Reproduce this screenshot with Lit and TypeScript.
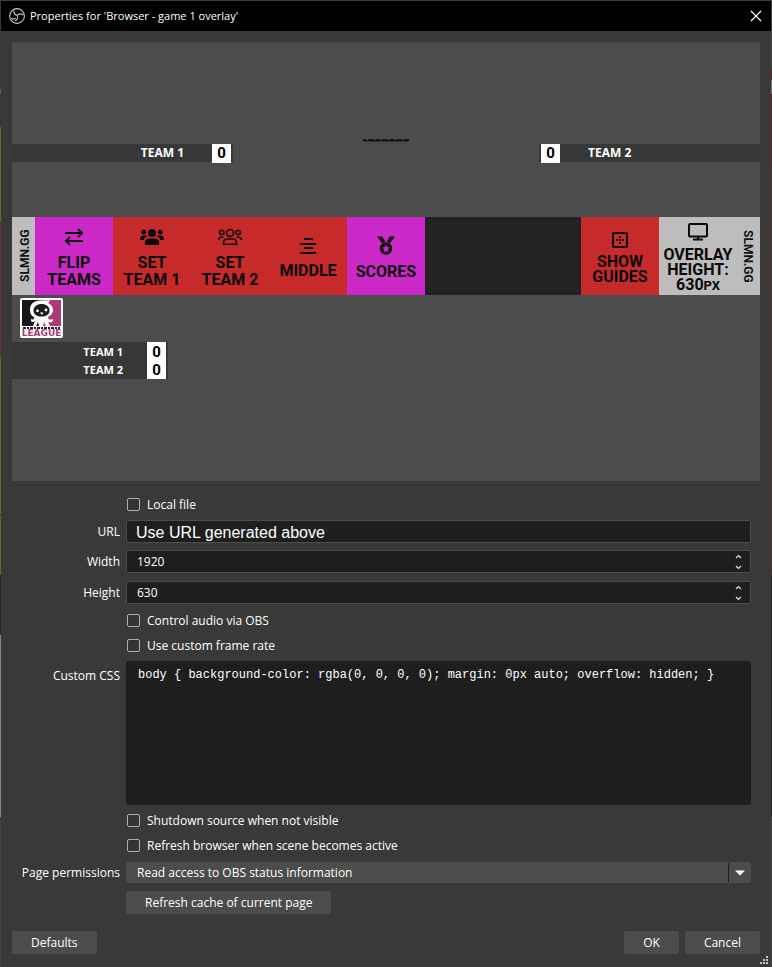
import { LitElement, html, css, svg } from "lit";
import { customElement, property } from "lit/decorators.js";

const icons: Record<string, unknown> = {
  swap: svg`<svg width="20" height="18" viewBox="0 0 20 18" fill="none" stroke="currentColor" stroke-width="2"><path d="M1 5H17M19 13H3"/><path d="M14 1l4 4l-4 4M6 9l-4 4l4 4"/></svg>`,
  users: svg`<svg width="24" height="18" viewBox="0 0 24 18" fill="currentColor"><circle cx="12" cy="5" r="4"/><circle cx="3.8" cy="4.2" r="2.4"/><circle cx="20.2" cy="4.2" r="2.4"/><path d="M5 17v-2.500q0-4 4-4h6q4 0 4 4V17zM0 11q0-3.500 3.500-3.500H6q1 0 1.300.8Q4 9.500 3.700 12H0zM24 11q0-3.500-3.500-3.500H18q-1 0-1.300.8Q20 9.500 20.300 12H24z"/></svg>`,
  usersOutline: svg`<svg width="24" height="18" viewBox="0 0 24 18" fill="none" stroke="currentColor" stroke-width="1.600"><circle cx="12" cy="5" r="3.500"/><circle cx="3.800" cy="4.500" r="2.200"/><circle cx="20.200" cy="4.500" r="2.200"/><path d="M5.500 16.200v-1.200q0-4 4-4h5q4 0 4 4v1.200zM.8 12q0-2.700 2.400-2.700H5.500M23.200 12q0-2.700-2.400-2.700H18.500"/></svg>`,
  align: svg`<svg width="16" height="16" viewBox="0 0 16 16" stroke="currentColor" stroke-width="2"><path d="M4 1h9M0 6h16M4 10h9M0 15h16"/></svg>`,
  medal: svg`<svg width="18" height="19" viewBox="0 0 18 19" fill="currentColor"><path d="M0 .5h5.200l3 5-3.400 1.600zM18 .5h-5.200l-3 5 3.400 1.600z"/><circle cx="9" cy="12.500" r="6.200"/><path fill="#ca29c8" d="M9 8.600l1.200 2.500 2.800.4-2 1.900.5 2.800L9 14.900l-2.500 1.300.5-2.800-2-1.900 2.800-.4z"/></svg>`,
  guides: svg`<svg width="16" height="16" viewBox="0 0 16 16" fill="currentColor"><rect x="1" y="1" width="14" height="14" rx="1" fill="none" stroke="currentColor" stroke-width="2"/><path d="M7 4h2v2H7zM7 7h2v2H7zM7 10h2v2H7zM4 7h2v2H4zM10 7h2v2h-2z"/></svg>`,
  monitor: svg`<svg width="20" height="18" viewBox="0 0 20 18" fill="none" stroke="currentColor" stroke-width="2"><rect x="1" y="1" width="18" height="12.500" rx="1"/><path d="M5 16.500h10M10 13v3"/></svg>`,
};

@customElement("deck-tile")
class DeckTile extends LitElement {
  @property() icon = "";
  @property({ attribute: false }) lines: string[] = [];
  @property() unit = "";
  @property({ type: Boolean }) dense = false;
  static styles = css`
    :host { display: grid; min-width: 0; }
    .tile {
      display: flex; flex-direction: column; align-items: center; justify-content: center;
      gap: 8px; border: 0; padding: 4px 0 0; min-width: 0; background: none; color: #0c0709;
      font: 700 16px/17px Roboto, "Liberation Sans", sans-serif; white-space: nowrap;
    }
    .tile.dense { gap: 6px; line-height: 15px; }
    svg { display: block; }
    .line { display: block; text-align: center; }
    .unit { font-size: 13px; }
  `;
  render() {
    return html`<button class="tile ${this.dense ? "dense" : ""}">
      ${icons[this.icon]}
      <span>${this.lines.map((l, i) => html`<span class="line">${l}${i === this.lines.length - 1 && this.unit ? html`<span class="unit">${this.unit}</span>` : ""}</span>`)}</span>
    </button>`;
  }
}

@customElement("overlay-preview")
class OverlayPreview extends LitElement {
  static styles = css`
    :host {
      display: flex; flex-direction: column; background: #4c4c4c; color: #fff;
      font: 700 12px/18px "Open Sans", sans-serif;
    }
    .top { height: 175px; display: flex; flex-direction: column; align-items: stretch; }
    .sliver {
      align-self: center; margin-top: 97px; width: 46px; height: 2px;
      background: linear-gradient(transparent 1px, #151515 1px), repeating-linear-gradient(90deg, #151515 0 4px, #777 4px 5px, #151515 5px 7px);
      border-bottom: 1px solid #333;
    }
    .scores { display: flex; justify-content: space-between; margin-top: 2px; }
    .side { display: flex; align-items: center; width: 221px; height: 18px; background: #373737; }
    .side.left { justify-content: flex-end; }
    .side .name { flex: 1; }
    .side.left .name { text-align: right; padding-right: 28px; }
    .side.right .name { padding-left: 28px; }
    .score {
      display: grid; place-items: center; width: 19px; height: 19px; background: #fff; color: #000;
      font: 700 15px/19px Roboto, sans-serif;
    }
    .left .score { margin-right: 2px; }
    .right .score { margin-left: 2px; }
    .deck { display: grid; grid-template-columns: 23px repeat(9, 1fr) 23px; height: 78px; background: #222; }
    .brand {
      display: grid; place-items: center; background: #bdbdbd; color: #111; padding-right: 2px;
      font: 700 12px/16px Roboto, sans-serif; writing-mode: vertical-rl;
    }
    .brand.up { transform: rotate(180deg); }
    .magenta { background: #ca29c8; }
    .red { background: #c72a2a; }
    .grey { background: #bdbdbd; }
    .wide { grid-column: span 2; }
    .bottom { padding: 3px 0 102px; }
    .logo { display: block; margin-left: 8px; }
    .mini { display: flex; width: 156px; margin-top: 4px; background: #373737; font-size: 11px; }
    .mini .names { flex: 1; text-align: right; padding-right: 24px; }
    .mini .points { width: 19px; margin-right: 2px; background: #fff; color: #000; text-align: center; font: 700 15px/18px Roboto, sans-serif; }
    .mini .names, .mini .points { display: grid; grid-template-rows: 18px 18px; padding-top: 1px; }
    .mark { font: 700 9px/9px "DejaVu Sans", sans-serif; }
  `;
  render() {
    return html`
      <div class="top">
        <div class="sliver"></div>
        <div class="scores">
          <div class="side left"><span class="name">TEAM 1</span><span class="score">0</span></div>
          <div class="side right"><span class="score">0</span><span class="name">TEAM 2</span></div>
        </div>
      </div>
      <div class="deck">
        <div class="brand up">SLMN.GG</div>
        <deck-tile class="magenta" icon="swap" .lines=${["FLIP", "TEAMS"]}></deck-tile>
        <deck-tile class="red" icon="users" .lines=${["SET", "TEAM 1"]}></deck-tile>
        <deck-tile class="red" icon="usersOutline" .lines=${["SET", "TEAM 2"]}></deck-tile>
        <deck-tile class="red" icon="align" .lines=${["MIDDLE"]}></deck-tile>
        <deck-tile class="magenta" icon="medal" .lines=${["SCORES"]}></deck-tile>
        <div class="wide"></div>
        <deck-tile class="red" dense icon="guides" .lines=${["SHOW", "GUIDES"]}></deck-tile>
        <deck-tile class="grey" dense icon="monitor" .lines=${["OVERLAY", "HEIGHT:", "630"]} unit="PX"></deck-tile>
        <div class="brand">SLMN.GG</div>
      </div>
      <div class="bottom">
        <svg class="logo" width="43" height="40" viewBox="0 0 43 40">
          <rect width="43" height="40" rx="2" fill="#fff"/>
          <path fill="#171717" d="M2 2h20v26H2z"/><path fill="#ad3a78" d="M22 2h19v26H22z"/>
          <path fill="#fff" d="M10 12C10 6 14 2.500 20 2.500h6c2 0 3-.5 3-1 1 2 0 3-1 3.500 4 2 5.500 5 5 8-.5 3-3 5-5 6 0 3 3 3 5 2 1 3-3 4-5 3l2 4h-4l-2-4-1 4h-4l-1-4-2 4h-3l2-5c-2 2-5 1-4-2 2 1 4 0 3-2-3-1-4-4-4-7z"/>
          <path fill="#1c1c1c" d="M13.500 12.500c0-4 3.500-6.500 8-6.500s8 2.500 8 6.500-3.500 6-8 6-8-2-8-6z"/>
          <circle cx="17.500" cy="12.800" r="1.400" fill="#fff"/><circle cx="26" cy="12" r="1.400" fill="#fff"/><path fill="#fff" d="M20 14.500h3.500L22 17z"/>
          <path d="M3 30h37" stroke="#222" stroke-width="2" stroke-dasharray="3 1 2 1"/>
          <text class="mark" x="21.500" y="38" text-anchor="middle" fill="#ad3a78">LEAGUE</text>
        </svg>
        <div class="mini">
          <div class="names"><span>TEAM 1</span><span>TEAM 2</span></div>
          <div class="points"><span>0</span><span>0</span></div>
        </div>
      </div>`;
  }
}

@customElement("app-root")
class AppRoot extends LitElement {
  static styles = css`
    :host {
      display: block; min-height: 100vh; box-sizing: border-box; padding: 0 1px;
      color: #fff; font: 12px/19px "Open Sans", "Noto Sans", sans-serif;
      background:
        linear-gradient(#383838 87px, #7a2a20 87px 89px, #66662c 89px 94px, #383838 94px 127px, #66662c 127px 222px, #6b3034 222px 357px, #66662c 357px 514px, #7a2a20 514px 516px, #66662c 516px 575px, #2b2b2b 575px 635px, #858585 635px 817px, #20507a 817px 819px, #444 819px) left / 1px 100% no-repeat,
        linear-gradient(#404040 68px, #6b2430 68px 80px, #777 80px 94px, #6b2430 94px 170px, #5a2a30 170px 575px, #2b2b2b 575px 817px, #444 817px) right / 1px 100% no-repeat,
        #393939;
    }
    * { box-sizing: border-box; }
    input, button, select, textarea { font: inherit; color: inherit; margin: 0; }
    .titlebar { display: flex; align-items: center; height: 31px; padding: 0 9px 0 8px; background: #000; border-top: 1px solid #3c3c3c; }
    .titlebar h1 { flex: 1; margin: 0 0 0 5px; font: 11px/18px "Open Sans", sans-serif; }
    .titlebar svg { display: block; }
    .close { border: 0; padding: 0; background: none; }
    .body { padding: 11px 11px 13px; display: flex; flex-direction: column; background: #393939; position: relative; }
    .form { display: flex; flex-direction: column; gap: 6px; margin: 14px 9px 16px 0; }
    .row { display: grid; grid-template-columns: 108px 1fr; column-gap: 6px; align-items: center; }
    .row > label:first-child { text-align: right; }
    .row.check > label { grid-column: 2; display: flex; align-items: center; gap: 7px; height: 19px; padding-left: 1px; text-align: left; }
    .check input { appearance: none; width: 13px; height: 13px; border: 1px solid #b0b0b0; border-radius: 2px; background: #333; }
    .row.spin, .row.action { height: 25px; }
    .field { display: block; width: 100%; height: 23px; padding: 0 10px; border: 1px solid #4c4c4c; border-radius: 2px; background: #1e1e1e; outline: 0; }
    .field.url { font: 16px/20px "Liberation Sans", Arial, sans-serif; padding: 2px 9px 0; }
    .field[type="number"] { appearance: textfield; }
    .wrap { display: grid; grid-template-columns: 1fr 24px; }
    .wrap > .field, .wrap > .combo { grid-area: 1 / 1 / 2 / 3; }
    .arrows { grid-area: 1 / 2; z-index: 1; display: flex; flex-direction: column; justify-content: center; gap: 6px; pointer-events: none; padding-left: 8px; }
    .arrows svg { display: block; }
    .row.css { align-items: start; }
    .row.css > label { padding-top: 5px; }
    textarea.code { display: block; width: 100%; height: 144px; padding: 6px 12px; border: 0; border-radius: 3px; background: #1e1e1e; resize: none; outline: 0; font: 12px/16px "Liberation Mono", "Courier New", monospace; }
    .row.pick { height: 23px; }
    .combo { appearance: none; width: 100%; height: 21px; padding: 0 11px; border: 0; border-radius: 2px; background: #4c4c4c; line-height: 19px; }
    .drop { grid-area: 1 / 2; z-index: 1; pointer-events: none; display: grid; place-items: center; margin: 1px 0 1px 1px; border-left: 1px solid #1e1e1e; }
    .btn { height: 23px; padding: 0 19px; border: 0; border-radius: 2px; background: #4c4c4c; line-height: 19px; }
    .row .btn { grid-column: 2; justify-self: start; }
    .footer { display: flex; gap: 6px; }
    .spacer { flex: 1; }
    .grip { position: absolute; right: 3px; bottom: 3px; }
  `;
  private check(label: string) {
    return html`<div class="row check"><label><input type="checkbox" />${label}</label></div>`;
  }
  private spin(id: string, label: string, value: number) {
    return html`<div class="row spin"><label for=${id}>${label}</label>
      <div class="wrap"><input class="field" id=${id} type="number" .value=${String(value)} />
        <span class="arrows">
          ${["M1 4l2.500-2.500L6 4", "M1 1l2.500 2.500L6 1"].map((d) => html`<svg width="7" height="5" viewBox="0 0 7 5" fill="none" stroke="#ddd" stroke-width="1.200"><path d=${d} /></svg>`)}
        </span></div></div>`;
  }
  render() {
    return html`
      <header class="titlebar">
        <svg width="16" height="16" viewBox="0 0 16 16" fill="none" stroke="#c8c8c8" stroke-width="1.100">
          <circle cx="8" cy="8" r="7.400"/>
          <path d="M5 2.500C4.600 5 5.800 6.800 8.300 7.400C9.800 5.600 12 5.400 14 7M8.300 7.400C9.200 9.800 8.200 12 5.800 12.800M2.300 10.300C3.600 11.300 5.500 11 6.600 9.800"/>
        </svg>
        <h1>Properties for 'Browser - game 1 overlay'</h1>
        <button class="close" aria-label="Close"><svg width="12" height="12" viewBox="0 0 12 12" stroke="#fff" stroke-width="1.200"><path d="M1 1l10 10M11 1L1 11"/></svg></button>
      </header>
      <main class="body">
        <overlay-preview></overlay-preview>
        <form class="form" @submit=${(e: Event) => e.preventDefault()}>
          ${this.check("Local file")}
          <div class="row"><label for="url">URL</label><input class="field url" id="url" type="text" value="Use URL generated above" /></div>
          ${this.spin("width", "Width", 1920)}
          ${this.spin("height", "Height", 630)}
          ${this.check("Control audio via OBS")}
          ${this.check("Use custom frame rate")}
          <div class="row css"><label for="css">Custom CSS</label><textarea class="code" id="css" spellcheck="false" .value=${"body { background-color: rgba(0, 0, 0, 0); margin: 0px auto; overflow: hidden; }"}></textarea></div>
          ${this.check("Shutdown source when not visible")}
          ${this.check("Refresh browser when scene becomes active")}
          <div class="row pick"><label for="perm">Page permissions</label>
            <div class="wrap"><select class="combo" id="perm"><option>Read access to OBS status information</option></select>
              <span class="drop"><svg width="10" height="6" viewBox="0 0 10 6"><path fill="#fff" d="M0 .5h10L5 5.500z"/></svg></span></div></div>
          <div class="row action"><button class="btn" type="button">Refresh cache of current page</button></div>
        </form>
        <footer class="footer">
          <button class="btn">Defaults</button><span class="spacer"></span><button class="btn">OK</button><button class="btn">Cancel</button>
        </footer>
        <svg class="grip" width="8" height="8" viewBox="0 0 8 8" fill="#c4c4c4"><path d="M6 0h2v2H6zM3 3h2v2H3zM6 3h2v2H6zM0 6h2v2H0zM3 6h2v2H3zM6 6h2v2H6z"/></svg>
      </main>`;
  }
}
